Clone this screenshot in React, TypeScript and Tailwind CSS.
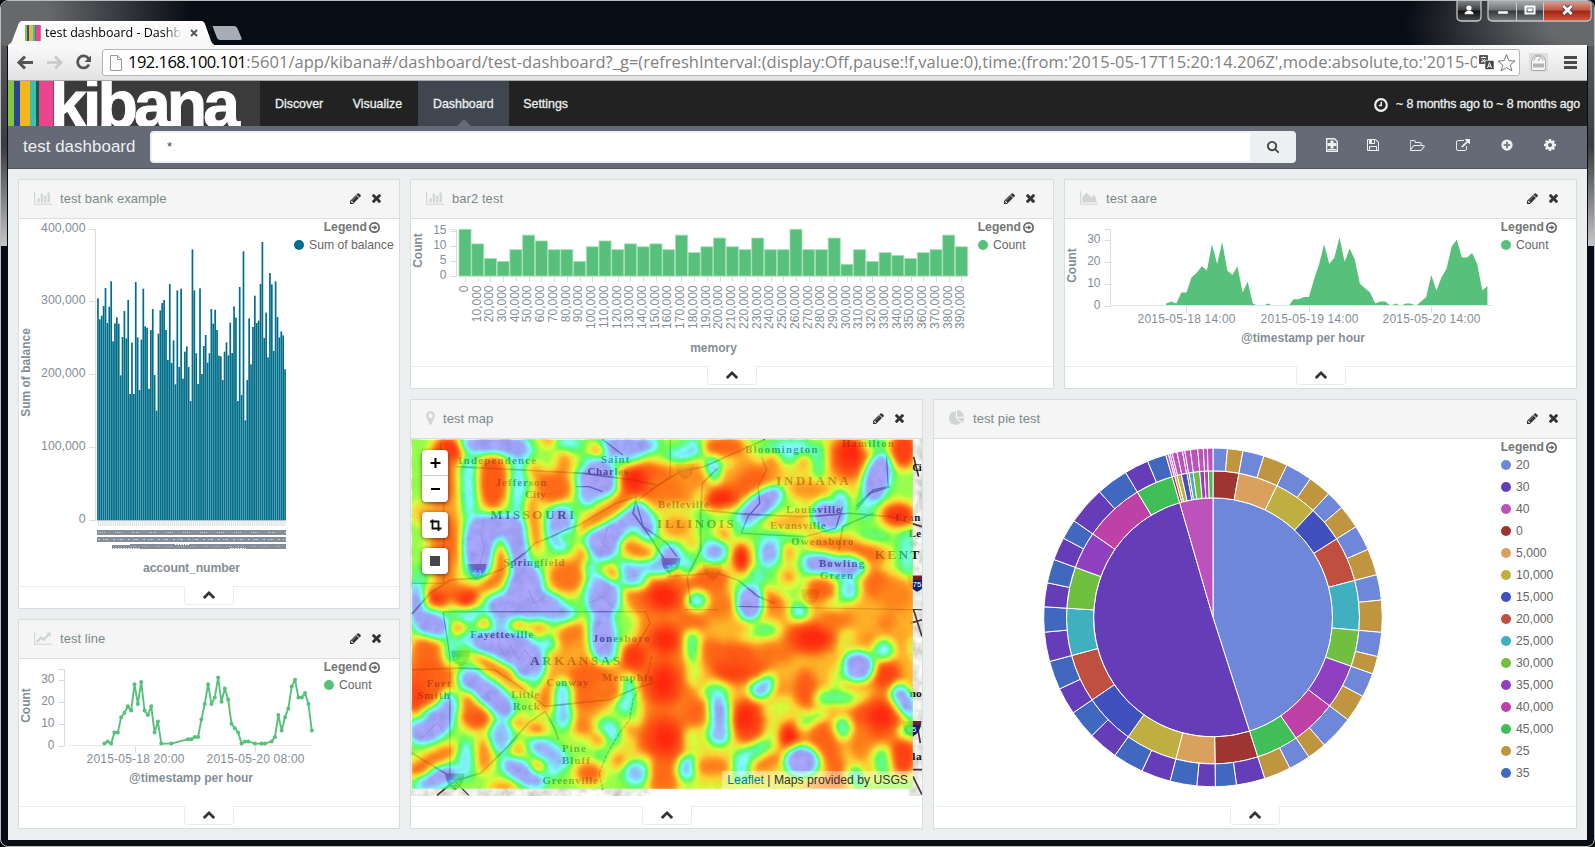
import React from "react";

/* ---------- icons ---------- */

const ICONS = {
  bar: ["0 0 2048 1536", "M640 768v512h-256v-512h256zm384-512v1024h-256v-1024h256zm1024 1152v128h-2048v-1536h128v1408h1920zm-640-896v768h-256v-768h256zm384-384v1152h-256v-1152h256z"],
  area: ["0 0 2048 1536", "M2048 1408v128h-2048v-1536h128v1408h1920zm-384-1024l256 896h-1664v-576l448-576 576 576z"],
  line: ["0 0 2048 1536", "M2048 1408v128h-2048v-1536h128v1408h1920zm-128-1248v435q0 21-19.5 29.5t-35.5-7.5l-121-121-633 633q-10 10-23 10t-23-10l-233-233-416 416-192-192 585-585q10-10 23-10t23 10l233 233 464-464-121-121q-16-16-7.5-35.5t29.5-19.5h435q14 0 23 9t9 23z"],
  pie: ["0 0 1792 1792", "M768 890l546 546q-106 108-247.5 168t-298.5 60q-209 0-385.5-103t-279.5-279.5-103-385.5 103-385.5 279.5-279.5 385.5-103v762zm187 6h773q0 157-60 298.5t-168 247.5zm709-128h-768v-768q209 0 385.5 103t279.5 279.5 103 385.5z"],
  marker: ["0 128 1024 1536", "M768 640q0-106-75-181t-181-75-181 75-75 181 75 181 181 75 181-75 75-181zm256 0q0 109-33 179l-364 774q-16 33-47.5 52t-67.5 19-67.5-19-46.5-52l-365-774q-33-70-33-179 0-212 150-362t362-150 362 150 150 362z"],
  pencil: ["128 128 1536 1536", "M491 1536l91-91-235-235-91 91v107h128v128h107zm523-928q0-22-22-22-10 0-17 7l-542 542q-7 7-7 17 0 22 22 22 10 0 17-7l542-542q7-7 7-17zm-54-192l416 416-832 832h-416v-416zm683 96q0 53-37 90l-166 166-416-416 166-165q36-38 90-38 53 0 91 38l235 234q37 39 37 91z"],
  times: ["302 366 1188 1188", "M1490 1322q0 40-28 68l-136 136q-28 28-68 28t-68-28l-294-294-294 294q-28 28-68 28t-68-28l-136-136q-28-28-28-68t28-68l294-294-294-294q-28-28-28-68t28-68l136-136q28-28 68-28t68 28l294 294 294-294q28-28 68-28t68 28l136 136q28 28 28 68t-28 68l-294 294 294 294q28 28 28 68z"],
  save: ["128 128 1536 1536", "M512 1536h768v-384h-768v384zm896 0h128v-896q0-14-10-38.5t-20-34.5l-281-281q-10-10-34-20t-39-10v416q0 40-28 68t-68 28h-576q-40 0-68-28t-28-68v-416h-128v1280h128v-416q0-40 28-68t68-28h832q40 0 68 28t28 68v416zm-384-928v-320q0-13-9.5-22.5t-22.5-9.5h-192q-13 0-22.5 9.5t-9.5 22.5v320q0 13 9.5 22.5t22.5 9.5h192q13 0 22.5-9.5t9.5-22.5zm640 32v928q0 40-28 68t-68 28h-1344q-40 0-68-28t-28-68v-1344q0-40 28-68t68-28h928q40 0 88 20t76 48l280 280q28 28 48 76t20 88z"],
  folder: ["0 128 1856 1408", "M1717 931q0-35-53-35h-1088q-40 0-85.5 21.5t-71.5 52.5l-294 363q-18 24-18 40 0 35 53 35h1088q40 0 86-22t71-53l294-363q18-22 18-39zm-1141-163h768v-160q0-40-28-68t-68-28h-576q-40 0-68-28t-28-68v-64q0-40-28-68t-68-28h-320q-40 0-68 28t-28 68v853l256-315q44-53 116-87.5t140-34.5zm1269 163q0 62-46 120l-295 363q-43 53-116 87.5t-140 34.5h-1088q-92 0-158-66t-66-158v-960q0-92 66-158t158-66h320q92 0 158 66t66 158v32h544q92 0 158 66t66 158v160h192q54 0 99 24.5t67 70.5q15 32 15 68z"],
  external: ["0 0 1792 1536", "M1408 928v320q0 119-84.5 203.5t-203.5 84.5h-832q-119 0-203.5-84.5t-84.5-203.5v-832q0-119 84.5-203.5t203.5-84.5h704q14 0 23 9t9 23v64q0 14-9 23t-23 9h-704q-66 0-113 47t-47 113v832q0 66 47 113t113 47h832q66 0 113-47t47-113v-320q0-14 9-23t23-9h64q14 0 23 9t9 23zm384-864v512q0 26-19 45t-45 19-45-19l-176-176-652 652q-10 10-23 10t-23-10l-114-114q-10-10-10-23t10-23l652-652-176-176q-19-19-19-45t19-45 45-19h512q26 0 45 19t19 45z"],
  plus: ["0 0 16 16", "M8 0.5a7.5 7.5 0 1 1 0 15a7.5 7.5 0 0 1 0-15zM6.9 3.6v3.3h-3.3v2.2h3.3v3.3h2.2v-3.3h3.3v-2.2h-3.3v-3.3z"],
  cog: ["128 128 1536 1536", "M1152 896q0-106-75-181t-181-75-181 75-75 181 75 181 181 75 181-75 75-181zm512-109v222q0 12-8 23t-20 13l-185 28q-19 54-39 91 35 50 107 138 10 12 10 25t-9 23q-27 37-99 108t-94 71q-12 0-26-9l-138-108q-44 23-91 38-16 136-29 186-7 28-36 28h-222q-14 0-24.5-8.5t-11.5-21.5l-28-184q-49-16-90-37l-141 107q-10 9-25 9-14 0-25-11-126-114-165-168-7-10-7-23 0-12 8-23 15-21 51-66.5t54-70.5q-27-50-41-99l-183-27q-13-2-21-12.5t-8-23.5v-222q0-12 8-23t19-13l186-28q14-46 39-92-40-57-107-138-10-12-10-24 0-10 9-23 26-36 98.5-107.5t94.5-71.5q13 0 26 10l138 107q44-23 91-38 16-136 29-186 7-28 36-28h222q14 0 24.5 8.5t11.5 21.5l28 184q49 16 90 37l142-107q9-9 24-9 13 0 25 10 129 119 165 170 7 8 7 22 0 12-8 23-15 21-51 66.5t-54 70.5q26 50 41 98l183 28q13 2 21 12.5t8 23.5z"],
  search: ["64 128 1664 1664", "M1216 832q0-185-131.5-316.5t-316.5-131.5-316.5 131.5-131.5 316.5 131.5 316.5 316.5 131.5 316.5-131.5 131.5-316.5zm512 832q0 52-38 90t-90 38q-54 0-90-38l-343-342q-179 124-399 124-143 0-273.5-55.5t-225-150-150-225-55.5-273.5 55.5-273.5 150-225 225-150 273.5-55.5 273.5 55.5 225 150 150 225 55.5 273.5q0 220-124 399l343 343q37 37 37 90z"],
  chevron: ["90 470 1612 1050", "M1683 1331l-166 165q-19 19-45 19t-45-19l-531-531-531 531q-19 19-45 19t-45-19l-166-165q-19-19-19-45.5t19-45.5l742-741q19-19 45-19t45 19l742 741q19 19 19 45.5t-19 45.5z"],
  arrow: ["0 0 11 11", "M5.500 0A5.500 5.500 0 1 1 5.500 11A5.500 5.500 0 0 1 5.500 0ZM5.500 1.700A3.800 3.800 0 1 0 5.500 9.300A3.800 3.800 0 0 0 5.500 1.700ZM2.600 4.700H5.300V2.900L8.400 5.500L5.300 8.100V6.300H2.600Z"],
} as const;

type IconName = keyof typeof ICONS;

function Icon({ name, className }: { name: IconName; className: string }) {
  const [viewBox, d] = ICONS[name];
  return (
    <svg viewBox={viewBox} className={"shrink-0 " + className} fill="currentColor" fillRule="evenodd">
      <path d={d} />
    </svg>
  );
}

/* ---------- browser window ---------- */

const STRIPES: [number, number, string][] = [
  [0, 6, "#85c441"],
  [6, 6, "#2b4591"],
  [12, 10, "#f3b71b"],
  [22, 6, "#3ebeb0"],
  [28, 3, "#07644f"],
  [31, 14.5, "#ec458d"],
];

function Favicon() {
  return (
    <svg className="h-4 w-4 shrink-0" viewBox="0 0 46 46" preserveAspectRatio="none">
      {STRIPES.map(([x, w, c]) => (
        <rect key={x} x={x} width={w} height="46" fill={c} />
      ))}
    </svg>
  );
}

function TitleBar() {
  return (
    <div className="relative flex h-[44px] items-end justify-between">
      <div className="relative ml-[-2px] h-[24px] w-[236px]">
        <svg className="absolute inset-0" width="236" height="24" viewBox="6 21 236 24">
          <defs>
            <linearGradient id="tabfill" x1="0" y1="0" x2="0" y2="1">
              <stop offset="0" stopColor="#ffffff" />
              <stop offset="1" stopColor="#f6f6f6" />
            </linearGradient>
          </defs>
          <path d="M6 45.5Q10.500 45 12 41L18.500 24Q19.500 21 22.500 21H201Q204 21 205 24L211 41Q212.500 45 216 45.500Z" fill="url(#tabfill)" />
          <path d="M212.500 26H234.500Q236.500 26 237.500 28.500L241.500 38Q242.300 40 240 40H220.500Q217.800 40 216.800 37.500Z" fill="#a6adb6" />
        </svg>
        <div className="relative flex h-[24px] items-center pl-[19px]">
          <Favicon />
          <span className="ml-1 h-[18px] w-[137px] overflow-hidden bg-gradient-to-r from-black from-85% to-white bg-clip-text font-['Open_Sans','Noto_Sans',sans-serif] text-[12.500px] leading-[17px] whitespace-nowrap text-transparent">
            test dashboard - Dashboard
          </span>
          <svg width="8" height="8" viewBox="0 0 8 8" className="ml-[8px]">
            <path d="M1 1L7 7M7 1L1 7" stroke="#555" strokeWidth="1.9" />
          </svg>
        </div>
      </div>
      <svg width="137" height="22" viewBox="1455 0 137 22" className="mr-[-5px] self-start">
        <defs>
          <linearGradient id="btn" x1="0" y1="0" x2="0" y2="1">
            <stop offset="0" stopColor="#a9abac" />
            <stop offset=".45" stopColor="#6f7376" />
            <stop offset=".5" stopColor="#34383b" />
            <stop offset="1" stopColor="#777b80" />
          </linearGradient>
          <linearGradient id="userbtn" x1="0" y1="0" x2="0" y2="1">
            <stop offset="0" stopColor="#808182" />
            <stop offset=".45" stopColor="#3c3d3e" />
            <stop offset=".5" stopColor="#0f1011" />
            <stop offset="1" stopColor="#4b4d50" />
          </linearGradient>
          <linearGradient id="closebtn" x1="0" y1="0" x2="0" y2="1">
            <stop offset="0" stopColor="#d99a8c" />
            <stop offset=".45" stopColor="#bd5540" />
            <stop offset=".5" stopColor="#a02410" />
            <stop offset="1" stopColor="#d6513a" />
          </linearGradient>
        </defs>
        <path d="M1457 0V15.500Q1457 20 1461.500 20H1477Q1481 20 1481 15.500V0" fill="url(#userbtn)" stroke="#c6c8ca" strokeWidth="1.300" />
        <path d="M1488 0V15.500Q1488 20 1492.500 20H1586.500Q1591 20 1591 15.500V0" fill="url(#btn)" stroke="#c6c8ca" strokeWidth="1.300" />
        <path d="M1544 1V19.300H1586.500Q1590.300 19.300 1590.300 15.500V1Z" fill="url(#closebtn)" />
        <path d="M1516.500 1V19.500M1543.500 1V19.500" stroke="#c6c8ca" />
        <circle cx="1469" cy="7" r="2.600" fill="#fff" />
        <path d="M1464.500 13.200Q1464.500 9.700 1469 9.700T1473.500 13.200Z" fill="#fff" />
        <rect x="1498" y="10" width="10" height="3" fill="#fff" stroke="#444a5a" strokeWidth=".5" />
        <path d="M1525.500 5.500H1534.500V12.500H1525.500ZM1528.500 8.500H1531.500V9.500H1528.500Z" fill="none" stroke="#fff" strokeWidth="2" />
        <path d="M1563.500 5L1571.500 13M1571.500 5L1563.500 13" stroke="#47485a" strokeWidth="4.600" />
        <path d="M1563.500 5L1571.500 13M1571.500 5L1563.500 13" stroke="#fff" strokeWidth="2.800" />
      </svg>
    </div>
  );
}

function Toolbar() {
  return (
    <div className="flex h-[36px] items-center border-b border-[#a9a9a9] bg-gradient-to-b from-[#fafafa] to-[#e2e2e2]">
      <svg width="94" height="35" viewBox="8 45 94 35" fill="none">
        <path d="M33 62.500H19.500M25 56.500L19 62.500L25 68.500" stroke="#555" strokeWidth="3" />
        <path d="M47 62.500H60.500M55 56.500L61 62.500L55 68.500" stroke="#c8c8c8" strokeWidth="2.600" />
        <path d="M88.500 58.500A6 6 0 1 0 89 64.500" stroke="#555" strokeWidth="2.800" />
        <path d="M91 55.500V62H84.500Z" fill="#555" />
      </svg>
      <div className="flex h-[27px] w-[1418px] items-center rounded-[3px] border border-[#b5b5b5] bg-white pl-[7px]">
        <svg width="12" height="16" viewBox="0 0 12 16" className="shrink-0">
          <path d="M.5.500H7.500L11.500 4.500V15.500H.5Z" fill="#fdfdfd" stroke="#999" />
          <path d="M7.500.5V4.500H11.500" fill="none" stroke="#999" />
        </svg>
        <div className="mt-[-1px] ml-[6px] w-[1349px] overflow-hidden font-['Open_Sans','Noto_Sans',sans-serif] text-[16.500px] leading-[24px] tracking-[0.020px] whitespace-nowrap text-[#808080]">
          <span className="tracking-[-0.530px] text-black">192.168.100.101</span>
          :5601/app/kibana#/dashboard/test-dashboard?_g=(refreshInterval:(display:Off,pause:!f,value:0),time:(from:'2015-05-17T15:20:14.206Z',mode:absolute,to:'2015-05-20
        </div>
        <svg width="40" height="20" viewBox="1477 53 40 20" className="shrink-0">
          <rect x="1479" y="55" width="9" height="9" rx="1" fill="#555" />
          <path d="M1481 57.500H1486M1483.500 56.500V57.500M1482 59Q1483.500 62 1486 62M1485 59Q1484 62 1481 62" stroke="#fff" fill="none" strokeWidth=".9" />
          <rect x="1485" y="60.500" width="9" height="9" rx="1" fill="#444" stroke="#fff" strokeWidth=".6" />
          <path d="M1487.500 68L1489.500 62.500L1491.500 68M1488.200 66.300H1490.800" stroke="#fff" fill="none" strokeWidth="1" />
          <path d="M1506.500 54.500L1508.800 60.700L1515 61L1510.200 65L1512 71L1506.500 67.500L1501 71L1502.800 65L1498 61L1504.200 60.700Z" fill="#fff" stroke="#777" />
        </svg>
      </div>
      <svg width="67" height="30" viewBox="1520 48 67 30">
        <rect x="1529" y="53" width="19" height="19" fill="#dedede" />
        <path d="M1531.500 69V62Q1532 55 1538.500 55T1545.500 62V69Q1545.500 70.500 1544 70.500H1533Q1531.500 70.500 1531.500 69Z" fill="#f6f6f6" stroke="#aaa" />
        <path d="M1534 60.500A4.500 4.500 0 0 1 1543 60.500M1538 61L1540.500 57.500" stroke="#999" fill="none" />
        <rect x="1533" y="63.500" width="11" height="4" fill="#b5b5b5" />
        <path d="M1564 57.500H1577M1564 62.500H1577M1564 67.500H1577" stroke="#4a4a4a" strokeWidth="2.900" />
      </svg>
    </div>
  );
}

/* ---------- kibana chrome ---------- */

function KibanaLogo() {
  return (
    <svg width="252" height="45" viewBox="0 0 252 45" className="shrink-0 bg-[#3b3b3b]">
      {STRIPES.map(([x, w, c]) => (
        <rect key={x} x={x} width={w} height="45" fill={c} />
      ))}
      <text x="42" y="45.500" fill="#fff" stroke="#fff" strokeWidth="1" fontSize="66" fontWeight="700" fontFamily="Liberation Sans, Arial, sans-serif" textLength="190" lengthAdjust="spacing">
        kibana
      </text>
    </svg>
  );
}

function NavBar() {
  return (
    <div className="flex h-[45px] items-center bg-[#222] pt-px text-[12.4px] text-[#ecf0f1] [-webkit-text-stroke:0.3px_#ecf0f1]">
      <div className="mt-[-1px] flex">
        <KibanaLogo />
      </div>
      <span className="pl-[15px] pr-[14.500px]">Discover</span>
      <span className="pr-[15.700px] pl-[15px]">Visualize</span>
      <span className="relative mt-[-1px] flex h-[45px] w-[91px] items-center justify-center bg-[#404650] pt-px">
        Dashboard
        <span className="absolute bottom-0 left-[39px] border-x-[7px] border-b-[7px] border-x-transparent border-b-[#656a76]" />
      </span>
      <span className="px-[14.500px]">Settings</span>
      <svg width="14" height="14" viewBox="0 0 14 14" className="mt-[2px] mr-[8px] ml-auto" fill="none" stroke="#ecf0f1">
        <circle cx="7" cy="7" r="5.800" strokeWidth="2.200" />
        <path d="M7.300 3.800V7.600H4.800" strokeWidth="1.500" />
      </svg>
      <span className="mr-[7px] tracking-[-0.150px]">~ 8 months ago to ~ 8 months ago</span>
    </div>
  );
}

function SubNav() {
  return (
    <div className="flex h-[43px] items-center border-b border-[#50545f] bg-[#656a76] pb-px text-[#ecf0f1]">
      <span className="w-[142px] pl-[15px] text-[16.900px] tracking-[0.050px]">test dashboard</span>
      <div className="flex h-[32px] w-[1146px] overflow-hidden rounded-[4px] border-2 border-[#ecf0f1] bg-white">
        <span className="flex-1 pt-[4px] pl-[15px] text-[13px] text-[#444]">*</span>
        <span className="flex w-[44px] items-center justify-center bg-[#ecf0f1] text-[#444]">
          <Icon name="search" className="ml-px h-[12px] w-[12px]" />
        </span>
      </div>
      <div className="mt-[-3px] ml-[30px] flex items-center">
        <span className="flex w-[12px] justify-center">
          <svg width="12" height="14" viewBox="0 0 12 14" className="shrink-0">
            <path d="M.7.700H8.500L11.300 3.500V13.300H.7Z" fill="none" stroke="#ecf0f1" strokeWidth="1.400" />
            <path d="M6 2.500V10.500M1.500 6.500H10.500" stroke="#ecf0f1" strokeWidth="3.200" />
            <path d="M2 11.500H10" stroke="#ecf0f1" strokeWidth="1.200" />
          </svg>
        </span>
        <Icon name="save" className="ml-[29px] h-[12px] w-[12px]" />
        <Icon name="folder" className="ml-[31px] h-[11px] w-[15px]" />
        <Icon name="external" className="ml-[31px] h-[12px] w-[14px]" />
        <Icon name="plus" className="ml-[31px] h-[12px] w-[12px]" />
        <Icon name="cog" className="ml-[31px] h-[12px] w-[12px]" />
      </div>
    </div>
  );
}

/* ---------- panels ---------- */

type PanelProps = {
  title: string;
  icon: IconName;
  iconClass?: string;
  className: string;
  children: React.ReactNode;
};

function Panel({ title, icon, iconClass = "h-[14px] w-[18px]", className, children }: PanelProps) {
  return (
    <section className={"flex shrink-0 flex-col border border-[#dadddd] bg-white " + className}>
      <header className="flex h-[39px] shrink-0 items-center border-b border-[#dadddd] bg-[#f5f5f5] pr-[18px] pl-[15px] text-[13px] tracking-[0.060px] text-[#7b8a8b]">
        <Icon name={icon} className={"mt-[-3px] mr-[8px] text-[#d0d5d6] " + iconClass} />
        <span>{title}</span>
        <Icon name="pencil" className="mt-[-1px] mr-[11px] ml-auto h-[11px] w-[11px] text-[#333]" />
        <Icon name="times" className="mt-[-1px] h-[9px] w-[9px] text-[#333]" />
      </header>
      <div className="flex min-h-0 flex-1 justify-between overflow-hidden">{children}</div>
      <footer className="flex h-[22px] shrink-0 justify-center border-t border-[#e9eced]">
        <span className="mt-[-1px] flex h-[19px] w-[50px] items-center justify-center rounded-b-[4px] border border-t-0 border-[#e9eced] bg-white text-[#333]">
          <Icon name="chevron" className="h-[8px] w-[12px]" />
        </span>
      </footer>
    </section>
  );
}

function Legend({ items, className = "w-[75px]" }: { items: [string, string][]; className?: string }) {
  return (
    <div className={"shrink-0 text-[12.200px] text-[#666] " + className}>
      <div className="flex h-[17px] items-center justify-end pr-[19px] pb-px font-bold text-[#767676]">
        Legend
        <Icon name="arrow" className="ml-[2px] h-[11px] w-[11px] text-[#666]" />
      </div>
      {items.map(([label, color]) => (
        <div key={label} className="flex h-[22px] items-center pb-[4px]">
          <svg width="10" height="10" viewBox="0 0 10 10" className="mr-[5px] shrink-0">
            <circle cx="5" cy="5" r="5" fill={color} />
          </svg>
          <span className="whitespace-nowrap">{label}</span>
        </div>
      ))}
    </div>
  );
}

type ChartProps = { x: number; y: number; w: number; h: number; children: React.ReactNode };

function Chart({ x, y, w, h, children }: ChartProps) {
  return (
    <svg width={w} height={h} viewBox={`${x} ${y} ${w} ${h}`} className="shrink-0" fill="#848e96" fontSize="12" fontFamily="Liberation Sans, Arial, sans-serif">
      {children}
    </svg>
  );
}

function YAxis({ x, top, bottom, ticks, size = 12 }: { x: number; top: number; bottom: number; ticks: [number, string][]; size?: number }) {
  return (
    <g>
      <path d={`M${x - 6} ${top}H${x}V${bottom}H${x - 6}` + ticks.map(([y]) => `M${x - 6} ${y}H${x}`).join("")} fill="none" stroke="#dcdcdc" />
      {ticks.map(([y, t]) => (
        <text key={t} x={x - 10} y={y + 2} textAnchor="end" fontSize={size}>
          {t}
        </text>
      ))}
    </g>
  );
}

function YTitle({ x, y, children }: { x: number; y: number; children: string }) {
  return (
    <text transform={`translate(${x + 4} ${y}) rotate(-90)`} textAnchor="middle" fontWeight="700">
      {children}
    </text>
  );
}

/* ---------- bank chart ---------- */

const BANK = [
  385, 448, 437, 408, 354, 459, 410, 334, 514, 460, 442, 461, 616, 501, 423, 505, 390, 672, 518, 672, 336, 502, 660, 509, 356,
  469, 473, 656, 480, 417, 615, 722, 491, 421, 399, 390, 480, 570, 342, 579, 511, 643, 361, 591, 356, 626, 545, 529, 591, 693,
  238, 361, 550, 642, 355, 612, 528, 495, 578, 550, 417, 461, 419, 480, 557, 559, 630, 545, 517, 556, 458, 549, 409, 443, 693,
  351, 675, 244, 751, 630, 445, 583, 471, 377, 459, 452, 342, 216, 504, 428, 562, 309, 343, 543, 334, 441, 502, 484, 496, 598,
];

function BankChart() {
  const pitch = 189 / BANK.length;
  return (
    <Chart x={19} y={219} w={274} h={367}>
      <YAxis x={95.5} top={229.5} bottom={520.5} size={12.3} ticks={[[229.5, "400,000"], [301.5, "300,000"], [374.5, "200,000"], [447.5, "100,000"], [520.5, "0"]]} />
      <YTitle x={25.5} y={372.5}>Sum of balance</YTitle>
      {BANK.map((v, i) => (
        <rect key={i} x={97.1 + i * pitch} y={170 + v / 3} width={1.7} height={350 - v / 3} fill="#006e8a" />
      ))}
      <path d="M97 520.500H286" stroke="#a9c9d2" />
      <path d="M98 523.500H286" stroke="#dcdcdc" strokeWidth="5" strokeDasharray="1 .9" />
      <path d="M97 532.500H286M97 539.500H286M112 546.500H286" stroke="#858e99" strokeWidth="5" />
      <path d="M98 532.500H286" stroke="#b9dcc4" strokeDasharray="1 1 1 1 1 1 1 10" />
      <path d="M98 539.500H286" stroke="#c3cbd6" strokeDasharray="2 3 1 1 3 5" />
      <path d="M113 548.500H140M175 544.500H190M230 548.500H246" stroke="#fff" strokeDasharray="1.500 1" />
      <path d="M111 544.500H130" stroke="#fff" />
      <path d="M130 546.500H286" stroke="#a5bdc0" strokeDasharray="1 2 1 1 1 6" />
      <text x="191.500" y="572" textAnchor="middle" fontWeight="700" textLength="97" fontSize="12.300">account_number</text>
    </Chart>
  );
}

/* ---------- memory histogram ---------- */

const MEMORY = [16, 11, 6, 5, 9, 14, 12, 9, 9, 5, 10, 12, 9, 11, 10, 11, 9, 14, 8, 10, 13, 10, 9, 13, 9, 9, 16, 9, 9, 13, 4, 9, 5, 8, 7, 6, 8, 9, 14, 10];

function MemoryChart() {
  const pitch = 12.73;
  return (
    <Chart x={411} y={219} w={565} h={147}>
      <YAxis x={456.5} top={229.5} bottom={276.5} ticks={[[231.5, "15"], [246.5, "10"], [261.5, "5"], [276.5, "0"]]} />
      <YTitle x={417.5} y={250.5}>Count</YTitle>
      <path d="M458 276.500H969" stroke="#e4e8e8" />
      {MEMORY.map((v, i) => (
        <g key={i}>
          <rect x={459 + i * pitch} y={276 - v * 2.92} width={pitch - 0.7} height={v * 2.92} fill="#57c17b" stroke="#a4ddb8" strokeWidth=".8" />
          <path d={`M${Math.round(465 + i * pitch) + 0.5} 277V282`} stroke="#dcdcdc" />
          <text transform={`translate(${467.8 + i * pitch} 285.500) rotate(-90)`} textAnchor="end">
            {i === 0 ? "0" : i + "0,000"}
          </text>
        </g>
      ))}
      <text x="713.500" y="352" textAnchor="middle" fontWeight="700">memory</text>
    </Chart>
  );
}

/* ---------- hourly counts ---------- */

const HOURLY = [
  1, 2, 1, 6, 6, 13, 15, 18, 16, 28, 19, 29, 16, 14, 18, 6, 11, 1, 0, 0, 1, 0, 0, 0, 0, 3, 3, 4, 4, 12, 19, 28, 19, 22, 31, 20, 26, 21,
  10, 8, 6, 1, 2, 2, 0, 1, 0, 1, 1, 0, 2, 4, 14, 7, 13, 17, 27, 30, 22, 22, 24, 19, 7, 9,
];

const countTicks = (zero: number): [number, string][] => [[zero - 66, "30"], [zero - 44, "20"], [zero - 22, "10"], [zero, "0"]];

function AreaChart() {
  const px = (i: number) => 1166.1 + i * 5.1;
  const pts = HOURLY.map((v, i) => `${px(i).toFixed(1)},${(305.8 - v * 2.2).toFixed(1)}`).join(" ");
  return (
    <Chart x={1065} y={219} w={434} h={147}>
      <YAxis x={1110.5} top={229.5} bottom={306.5} ticks={countTicks(306.5)} />
      <YTitle x={1071.5} y={265.5}>Count</YTitle>
      <polygon points={`${px(0)},305.800 ${pts} ${px(63)},305.800`} fill="#57c17b" />
      <path d="M1112 305.500H1493" stroke="#e2e6e6" />
      {[[1186.5, "2015-05-18 14:00"], [1309.5, "2015-05-19 14:00"], [1431.5, "2015-05-20 14:00"]].map(([x, t]) => (
        <g key={t}>
          <path d={`M${x} 306V312`} stroke="#dcdcdc" />
          <text x={x} y="323" textAnchor="middle" textLength="98">{t}</text>
        </g>
      ))}
      <text x="1303" y="342" textAnchor="middle" fontWeight="700" textLength="124">@timestamp per hour</text>
    </Chart>
  );
}

function LineChart() {
  const pts = HOURLY.slice(0, 63)
    .map((v, i): [number, number, number] => [104.4 + i * 3.345, 745.8 - v * 2.2, v])
    .filter((p) => p[2] > 0);
  return (
    <Chart x={19} y={659} w={303} h={147}>
      <YAxis x={64.5} top={669.5} bottom={746.5} ticks={countTicks(746.5)} />
      <YTitle x={25.5} y={705.5}>Count</YTitle>
      <path d="M69 745.500H313" stroke="#e6eaea" />
      <polyline points={pts.map(([x, y]) => `${x},${y}`).join(" ")} fill="none" stroke="#57c17b" strokeWidth="1.900" strokeLinejoin="round" />
      {pts.map(([x, y], i) => (
        <circle key={i} cx={x} cy={y} r="2" fill="#57c17b" />
      ))}
      {[[135.5, "2015-05-18 20:00"], [255.5, "2015-05-20 08:00"]].map(([x, t]) => (
        <g key={t}>
          <path d={`M${x} 746V752`} stroke="#dcdcdc" />
          <text x={x} y="763" textAnchor="middle" textLength="98">{t}</text>
        </g>
      ))}
      <text x="191" y="782" textAnchor="middle" fontWeight="700" textLength="124">@timestamp per hour</text>
    </Chart>
  );
}

/* ---------- pie ---------- */

const C = {
  a20: "#6e87d8", a30: "#663db8", a40: "#bc52bc", b0: "#9e3533", b5: "#daa05d", b10: "#bfaf40", b15: "#4050bf", b20: "#bf5040",
  b25: "#40afbf", b30: "#70bf40", b35: "#8f40bf", b40: "#bf40a7", b45: "#40bf58", a25: "#bf9540", a35: "#4068bf",
};
const TEN = [C.b0, C.b5, C.b10, C.b15, C.b20, C.b25, C.b30, C.b35, C.b40, C.b45];

const ring = (angles: number[], colors: string[]): [number, number, string][] =>
  angles.slice(1).map((a, i) => [angles[i], a, colors[i % colors.length]]);

const INNER = ring([0, 162.2, 343.8, 360], [C.a20, C.a30, C.a40]);
const MIDDLE = [
  ...ring([0, 10.2, 25.9, 43.1, 57.6, 75.4, 95.1, 109.5, 127.2, 145.5, 162.2], TEN),
  ...ring([162.2, 179.2, 194.7, 215.4, 235.7, 254.9, 273.6, 290, 304.8, 328.9, 343.8], TEN),
  ...ring([343.8, 344.8, 345.8, 347.5, 349.8, 350.6, 352.2, 354.8, 356.6, 358.2, 360], TEN),
];
const OUTER = [
  ...ring([0, 4.9, 10.2, 17.5, 25.9, 35.1, 43.1, 49.5, 57.6, 66.3, 75.4, 84.1, 95.1, 103.4, 109.5, 117.8, 127.2, 138.9, 145.5, 153, 162.2], [C.a20, C.a25]),
  ...ring([162.2, 172, 179.2, 185.5, 194.7, 204.8, 215.4, 225.7, 235.7, 245, 254.9, 265, 273.6, 281.8, 290, 297.9, 304.8, 317.9, 328.9, 337.3, 343.8], [C.a30, C.a35]),
  ...ring([343.8, 344.7, 345.3, 346, 347.7, 349.6, 350.4, 352.3, 354.8, 356.7, 358.1, 360], [C.a40]),
];

function arcPath(r0: number, r1: number, a0: number, a1: number) {
  const p = (r: number, a: number) => {
    const t = (a * Math.PI) / 180;
    return `${(1213 + r * Math.sin(t)).toFixed(2)} ${(617.4 - r * Math.cos(t)).toFixed(2)}`;
  };
  const big = a1 - a0 > 180 ? 1 : 0;
  return `M${p(r0, a0)}L${p(r1, a0)}A${r1} ${r1} 0 ${big} 1 ${p(r1, a1)}L${p(r0, a1)}A${r0} ${r0} 0 ${big} 0 ${p(r0, a0)}Z`;
}

function PieChart() {
  const levels: [number, number, [number, number, string][]][] = [[0.01, 119.5, INNER], [119.5, 146.5, MIDDLE], [146.5, 169.3, OUTER]];
  return (
    <Chart x={934} y={439} w={565} h={367}>
      {levels.map(([r0, r1, segs]) => segs.map(([a0, a1, c]) => <path key={`${r0}-${a0}`} d={arcPath(r0, r1, a0, a1)} fill={c} stroke="#fff" strokeWidth="1" />))}
    </Chart>
  );
}

/* ---------- map ---------- */

// Heat blobs: x, y, rx, ry, rotation, intensity (0 = cold, 1 = hot)
type Blob = [number, number, number, number, number, number];

const GROUND: Blob[] = [
  [1080, 860, 460, 230, 0, 0.83],
  [1100, 1080, 460, 130, 0, 0.75],
  [780, 900, 95, 340, 0, 0.9],
  [1440, 660, 130, 120, 0, 0.84],
  [780, 610, 120, 95, 0, 0.9],
  [800, 290, 190, 75, -5, 0.86],
  [1040, 270, 120, 75, -30, 0.86],
  [1290, 250, 160, 120, 0, 0.76],
  [1330, 210, 75, 80, 0, 0.84],
  [540, 860, 115, 135, 0, 0.85],
  [90, 870, 85, 125, 0, 0.87],
  [130, 400, 52, 260, 0, 0.86],
  [1330, 480, 135, 45, 10, 0.85],
  [1400, 970, 110, 140, 0, 0.86],
  [1230, 1040, 100, 90, 0, 0.84],
];

const COLD: Blob[] = [
  [280, 162, 100, 26, 0, 0], [350, 185, 40, 20, 0, 0.1],
  [205, 290, 20, 100, 0, 0.32], [352, 290, 20, 100, 0, 0.32], [500, 160, 40, 20, 0, 0.35],
  [665, 165, 100, 22, 0, 0], [600, 195, 50, 20, -20, 0.1], [590, 270, 60, 50, 0, 0], [555, 315, 24, 30, 0, 0.1], [680, 200, 40, 20, 0, 0.25],
  [845, 195, 55, 20, 0, 0.3], [880, 165, 40, 15, 0, 0.33], [925, 240, 20, 40, 0, 0.2], [905, 270, 15, 30, 0, 0.35],
  [235, 470, 42, 90, 0, 0], [290, 410, 90, 32, 0, 0], [345, 500, 30, 110, 0, 0], [370, 590, 50, 70, 0, 0], [370, 645, 110, 40, 0, 0],
  [475, 410, 38, 70, 0, 0.1], [240, 680, 90, 22, 0, 0.28], [460, 670, 60, 24, 0, 0.15],
  [610, 440, 52, 70, 25, 0], [600, 620, 48, 60, 0, 0], [560, 560, 20, 70, 0, 0.3], [670, 390, 50, 28, -30, 0.08], [720, 390, 28, 60, -25, 0.08], [670, 540, 55, 20, 0, 0.15], [760, 530, 50, 24, 0, 0.2], [800, 500, 30, 34, 0, 0.05], [690, 570, 40, 20, 0, 0.2],
  [1065, 345, 78, 30, -38, 0], [1020, 390, 28, 26, 0, 0.15], [1095, 490, 30, 42, 0, 0.12], [930, 485, 34, 30, 0, 0.12], [850, 525, 20, 28, 0, 0.35], [900, 350, 20, 80, 0, 0.48], [985, 420, 20, 20, 0, 0.45],
  [1150, 190, 90, 30, 0, 0.4], [1160, 165, 60, 14, 0, 0.35], [1240, 210, 18, 60, 0, 0.45],
  [1270, 375, 48, 45, 0, 0], [1300, 340, 24, 35, 0, 0.1], [1240, 520, 55, 28, 0, 0.05], [1320, 530, 55, 28, 0, 0.1], [1330, 600, 26, 34, 0, 0.28], [1130, 440, 80, 18, 0, 0.48], [1060, 560, 24, 26, 0, 0.42],
  [1412, 265, 36, 75, 15, 0], [1375, 350, 24, 40, 0, 0.42], [1400, 165, 60, 12, 0, 0.45], [1500, 490, 22, 70, 0, 0.4], [1400, 440, 50, 16, 10, 0.5],
  [1035, 640, 36, 50, 0, 0], [1180, 665, 28, 22, 0, 0.28],
  [48, 640, 22, 60, 0, 0.1], [95, 705, 50, 38, 20, 0.05], [60, 560, 22, 28, 0, 0.5], [105, 560, 15, 25, 0, 0.5],
  [270, 745, 130, 22, 0, 0.28], [300, 695, 36, 26, 0, 0.2], [320, 780, 105, 42, 12, 0], [385, 830, 42, 45, 30, 0], [600, 740, 36, 75, 0, 0.02], [620, 795, 26, 20, 0, 0.2], [440, 760, 30, 18, 0, 0.3],
  [150, 780, 18, 45, 0, 0.4], [210, 870, 38, 32, 20, 0.1], [275, 925, 78, 34, 42, 0.02], [95, 1005, 72, 42, -35, 0], [140, 950, 28, 45, 0, 0.15], [300, 1040, 32, 50, 0, 0.2], [390, 880, 26, 36, 0, 0.38],
  [440, 1090, 66, 28, 35, 0.15], [365, 1150, 72, 28, 30, 0.05], [110, 1165, 66, 26, -20, 0.05], [195, 1110, 20, 60, 0, 0.3], [485, 930, 26, 60, 0, 0.25], [485, 985, 24, 30, 0, 0.25], [450, 1130, 28, 30, 0, 0.28],
  [620, 1025, 28, 38, 0, 0.3], [670, 920, 24, 60, 10, 0.3], [700, 1150, 34, 34, 0, 0.22], [600, 1090, 20, 30, 0, 0.5],
  [850, 1135, 24, 38, 10, 0.18], [945, 965, 24, 85, -5, 0.1], [945, 1030, 30, 35, 0, 0.16], [1070, 885, 32, 40, 20, 0.15], [865, 760, 18, 70, 0, 0.45], [935, 905, 40, 20, 0, 0.45], [1080, 720, 40, 20, 0, 0.48],
  [1190, 1115, 48, 42, 0, 0], [1355, 830, 45, 42, 0, 0], [1430, 780, 30, 28, 0, 0.32], [1490, 930, 24, 60, -30, 0.08], [1290, 925, 70, 22, 0, 0.48], [1220, 990, 45, 15, -30, 0.48], [1310, 1015, 22, 32, 0, 0.38],
  [1050, 1085, 55, 20, -30, 0.4], [1010, 1130, 22, 48, 0, 0.32], [1430, 1115, 30, 40, 0, 0.48], [1350, 1165, 22, 32, 0, 0.38], [1500, 1030, 20, 24, 0, 0.4], [740, 1100, 24, 24, 0, 0.55],
];

const WARM: Blob[] = [
  [140, 185, 50, 48, 0, 1], [125, 260, 40, 90, 0, 0.92], [140, 470, 42, 95, 0, 0.92], [60, 370, 24, 34, 0, 0.83], [130, 540, 42, 40, 0, 0.9],
  [275, 275, 50, 90, 0, 0.94], [440, 150, 26, 22, 0, 0.88], [487, 220, 28, 42, 0, 0.88], [400, 245, 30, 28, 0, 0.85], [455, 295, 58, 55, 0, 0.92], [395, 400, 27, 92, -8, 0.88],
  [585, 182, 26, 26, 0, 0.9], [610, 370, 105, 29, -33, 0.9], [720, 270, 84, 62, 0, 0.94], [695, 270, 35, 34, 0, 1], [800, 290, 65, 45, 0, 0.91], [870, 270, 55, 38, 0, 0.88],
  [960, 170, 70, 38, 0, 0.93], [950, 325, 62, 38, -15, 0.96], [950, 325, 36, 22, -15, 1], [1040, 275, 60, 42, -40, 0.93], [1100, 215, 30, 30, 0, 0.88], [880, 220, 30, 18, 0, 0.86],
  [1330, 200, 56, 65, 0, 0.96], [1330, 190, 30, 36, 0, 1.02], [1490, 180, 46, 60, 0, 0.97], [1195, 215, 24, 24, 0, 0.86], [1210, 300, 65, 30, 0, 0.87], [1475, 375, 55, 42, 0, 0.98], [1150, 390, 80, 20, -15, 0.85], [1185, 415, 70, 18, 0, 0.82],
  [700, 480, 60, 28, 25, 0.9], [820, 410, 52, 40, 0, 0.86], [865, 460, 20, 22, 0, 0.82], [495, 560, 60, 56, 0, 0.91], [540, 495, 26, 30, 0, 0.88], [630, 552, 27, 27, 0, 0.9],
  [300, 510, 30, 42, 0, 0.9], [280, 570, 62, 28, -35, 0.91], [110, 620, 38, 40, 0, 0.98], [195, 622, 40, 40, 0, 0.99], [150, 590, 62, 20, 0, 0.9],
  [780, 620, 70, 52, 0, 0.95], [780, 620, 40, 34, 0, 1.03], [920, 570, 62, 46, 0, 0.93], [940, 640, 55, 50, 0, 0.9], [1010, 505, 32, 50, 0, 1], [1105, 630, 30, 44, -10, 0.94], [1150, 490, 24, 32, 0, 0.86], [1150, 560, 28, 28, 0, 0.88], [960, 430, 26, 32, 0, 0.87],
  [1240, 600, 56, 42, 0, 0.93], [1410, 580, 42, 50, 0, 0.92], [1470, 620, 50, 50, 0, 0.89], [1290, 470, 65, 28, 0, 0.9], [1380, 490, 52, 30, 20, 0.92],
  [880, 632, 28, 24, 0, 0.3],
  [250, 700, 25, 24, 0, 0.88], [172, 715, 25, 28, 0, 0.88], [350, 703, 28, 22, 0, 0.88], [412, 716, 28, 24, 0, 0.88], [505, 730, 54, 33, -30, 0.9], [80, 780, 52, 44, 30, 0.92],
  [80, 880, 62, 70, 0, 0.94], [45, 930, 30, 50, 0, 0.97], [120, 860, 30, 50, 0, 0.93], [285, 835, 84, 26, 33, 0.9], [345, 885, 52, 22, 20, 0.87], [225, 980, 52, 45, 20, 0.95], [205, 940, 28, 36, 0, 0.91],
  [560, 870, 68, 55, 0, 0.93], [550, 930, 50, 34, 0, 0.92], [620, 900, 45, 42, 0, 0.91], [430, 925, 30, 48, 0, 0.9], [405, 1018, 30, 27, 0, 0.9], [348, 997, 27, 23, 0, 0.88], [540, 1010, 36, 32, 0, 0.9], [588, 1050, 28, 26, 0, 0.88],
  [105, 1105, 78, 27, -28, 0.91], [55, 1140, 37, 28, 0, 0.93], [250, 1095, 28, 58, 0, 0.89], [346, 1080, 24, 24, 0, 0.88], [410, 1130, 26, 24, 0, 0.88], [560, 1150, 44, 36, 0, 0.93], [645, 1113, 30, 27, 0, 0.88], [305, 1190, 45, 16, 0, 0.92], [685, 1018, 27, 25, 0, 0.87],
  [785, 750, 54, 52, 0, 0.96], [785, 750, 32, 30, 0, 1.03], [690, 800, 42, 44, 0, 0.98], [780, 880, 58, 74, 0, 0.96], [780, 880, 30, 46, 0, 1], [780, 1050, 66, 78, 0, 0.96], [785, 1045, 34, 38, 0, 1.05], [775, 1150, 42, 45, 0, 0.92],
  [1215, 745, 78, 52, 0, 0.96], [1222, 745, 46, 30, 0, 1.05], [1000, 820, 98, 64, 10, 0.94], [985, 850, 55, 32, 0, 0.97], [920, 780, 36, 36, 0, 0.93], [1110, 790, 60, 34, 0, 0.91], [1200, 900, 36, 64, 0, 0.94], [1130, 895, 28, 28, 0, 0.87],
  [1440, 855, 44, 50, 10, 0.97], [1030, 995, 56, 72, 0, 0.96], [1022, 985, 30, 36, 0, 1.02], [1410, 985, 78, 68, 0, 0.95], [1422, 980, 36, 34, 0, 1.05], [1150, 1038, 34, 42, 0, 1], [1255, 1050, 46, 64, -20, 0.93], [1490, 1100, 44, 62, 0, 0.97], [1360, 1060, 30, 60, 0, 0.9],
  [880, 970, 36, 46, 10, 0.93], [925, 1130, 60, 31, 0, 0.9], [1090, 1115, 55, 28, -30, 0.9], [1290, 1130, 32, 48, 0, 0.93], [1270, 1190, 80, 20, 0, 0.92], [1292, 965, 24, 24, 0, 0.85], [1385, 1130, 20, 42, 0, 0.82], [1440, 700, 28, 28, 0, 0.9], [1390, 750, 28, 26, 0, 0.88], [1480, 760, 22, 32, 0, 0.86],
  [870, 700, 44, 28, 0, 0.92], [1120, 665, 40, 15, 0, 0.88], [1290, 690, 55, 30, 0, 0.91],
];

// Yellow-green gaps between the warm clusters
const GAPS: Blob[] = [
  [870, 850, 14, 40, 0, 0.62], [1120, 950, 46, 18, -20, 0.68], [1100, 1040, 12, 50, 0, 0.64], [860, 1050, 14, 36, 0, 0.64], [1050, 740, 46, 10, 0, 0.66],
  [1300, 860, 18, 46, 20, 0.64], [1190, 980, 12, 26, 0, 0.66], [1350, 930, 46, 10, -25, 0.64], [700, 960, 16, 50, 0, 0.64], [640, 980, 26, 24, 0, 0.68],
  [1320, 750, 14, 36, 20, 0.68], [490, 440, 30, 20, 0, 0.6], [900, 400, 14, 46, 0, 0.56], [1110, 560, 12, 56, 0, 0.6],
  [1190, 560, 12, 56, 0, 0.6], [1280, 330, 18, 18, 0, 0.6], [970, 400, 56, 9, 0, 0.68], [1060, 190, 10, 36, 0, 0.68],
  [60, 990, 40, 10, 0, 0.56], [510, 1060, 26, 12, 0, 0.68], [840, 360, 56, 9, 10, 0.68],
];

function HeatBlobs({ blobs }: { blobs: Blob[] }) {
  return (
    <g>
      {blobs.map(([x, y, rx, ry, rot, v], i) => {
        const k = Math.round(Math.max(0, Math.min(1, v)) * 255);
        return <ellipse key={i} cx={x} cy={y} rx={rx} ry={ry} transform={`rotate(${rot} ${x} ${y})`} fill={`rgb(${k},${k},${k})`} />;
      })}
    </g>
  );
}

// text, x, y baseline, width, size, colour
const PLACES: [string, number, number, number, number, string][] = [
  ["Independence", 173, 221, 230, 32, "#10103a"],
  ["Saint", 595, 218, 84, 32, "#10103a"],
  ["Charles", 555, 254, 120, 32, "#10103a"],
  ["Jefferson", 284, 288, 150, 32, "#10103a"],
  ["City", 370, 324, 62, 32, "#10103a"],
  ["MISSOURI", 268, 388, 248, 38, "#111"],
  ["Springfield", 307, 528, 180, 32, "#10103a"],
  ["Belleville", 764, 354, 150, 32, "#10103a"],
  ["ILLINOIS", 762, 414, 226, 38, "#111"],
  ["Bloomington", 1022, 188, 214, 32, "#10103a"],
  ["Hamilton", 1308, 170, 154, 32, "#10103a"],
  ["INDIANA", 1114, 284, 214, 38, "#111"],
  ["Louisville", 1143, 368, 162, 32, "#10103a"],
  ["Evansville", 1096, 416, 164, 32, "#10103a"],
  ["Owensboro", 1158, 464, 184, 32, "#10103a"],
  ["Bowling", 1240, 530, 134, 32, "#10103a"],
  ["Green", 1243, 568, 98, 32, "#10103a"],
  ["KENT", 1405, 508, 132, 40, "#111"],
  ["Fran", 1466, 392, 74, 32, "#10103a"],
  ["Fayetteville", 208, 744, 186, 32, "#10103a"],
  ["Jonesboro", 571, 758, 168, 32, "#10103a"],
  ["ARKANSAS", 386, 827, 266, 38, "#111"],
  ["Fort", 80, 892, 70, 32, "#10103a"],
  ["Smith", 52, 928, 96, 32, "#10103a"],
  ["Conway", 434, 890, 124, 32, "#10103a"],
  ["Memphis", 598, 875, 150, 32, "#10103a"],
  ["Little", 330, 926, 82, 32, "#10103a"],
  ["Rock", 334, 962, 80, 32, "#10103a"],
  ["Pine", 480, 1088, 70, 32, "#10103a"],
  ["Bluff", 480, 1124, 82, 32, "#10103a"],
  ["Greenville", 422, 1184, 164, 32, "#10103a"],
  ["Ci", 1516, 242, 28, 32, "#111"],
  ["Le", 1506, 440, 36, 32, "#111"],
  ["no", 1508, 922, 36, 34, "#111"],
  ["la", 1516, 1112, 28, 34, "#111"],
];

const SHIELDS: [number, number, string][] = [[228, 545, "44"], [802, 528, "57"], [844, 243, "70"], [925, 545, "24"], [1215, 620, "65"], [180, 805, "540"], [163, 1174, "30"], [1530, 580, "75"], [1515, 1016, "65"]];

function MapLines() {
  return (
    <g>
      <g fill="none" stroke="#4a3038" strokeWidth="5">
        <path d="M165 230L360 240L545 250L690 270L760 285" />
        <path d="M36 672L90 610L150 570L230 565L300 540L370 490L400 460L450 440L490 420L530 405L640 340L700 320" />
        <path d="M700 320L690 370L740 440L790 520L800 560" />
        <path d="M740 300L830 245L900 230L1010 180L1080 149" />
        <path d="M890 360L1010 372L1180 380L1240 378L1330 370L1450 380L1545 410" />
        <path d="M1350 350L1390 310L1450 290" />
        <path d="M890 360L890 480L850 560L860 640M940 235L895 280L890 360" />
        <path d="M790 560L940 550L1000 570L1060 620L1110 640" />
        <path d="M36 840L180 835L280 840L340 880L430 950L620 930L700 895L748 880" />
        <path d="M110 1217L160 1175L240 1150L320 1070L380 1000L430 965" />
        <path d="M430 965L455 1010L470 1050M36 1090L100 1130L150 1160" />
        <path d="M1520 200L1535 260M1545 690L1510 700M1530 1000L1540 1060M1518 1140H1545M1520 660L1545 740M1518 1160L1545 1215M1300 480L1310 410L1400 370" />
      </g>
      <g fill="none" stroke="#222" strokeWidth="3">
        <path d="M128 666H728L740 700L700 770M128 666L148 800V1160L204 1217M36 580H130V300L120 160M940 660H840M1000 650L1545 660M800 149V260L705 330M660 195L600 149" />
      </g>
      <g fill="none" stroke="#2a3568" strokeWidth="4">
        <path d="M745 800L735 850L690 930L680 990L650 1030L632 1060L610 1100L590 1150L600 1200" strokeDasharray="12 3" />
        <path d="M1070 200L1085 240L1060 290L1065 340L1030 380L1010 430L1100 435L1200 440L1290 415L1310 350" />
        <path d="M1440 200L1445 290L1400 300L1350 360M700 340L720 410L790 460L820 500M520 290L560 290L600 305" />
      </g>
    </g>
  );
}

function PlaceNames() {
  return (
    <g>
      {PLACES.map(([t, x, y, w, size, fill]) => (
        <text key={t} x={x} y={y} textLength={w} fontSize={size} fill={fill} fontWeight="700" fontFamily="Liberation Serif, serif">
          {t}
        </text>
      ))}
    </g>
  );
}

function HeatMap() {
  return (
    <svg width="511" height="357" viewBox="33 147 1512 1072" preserveAspectRatio="none" className="shrink-0">
      <defs>
        <clipPath id="tiles">
          <path d="M33 147H1545V1219H1506V1199H748V1219H33Z" />
        </clipPath>
        <clipPath id="heatclip">
          <rect x="36" y="149" width="1482" height="1048" />
        </clipPath>
        <filter id="terrain" x="0" y="0" width="100%" height="100%" colorInterpolationFilters="sRGB">
          <feTurbulence type="fractalNoise" baseFrequency="0.03" numOctaves="4" seed="4" />
          <feColorMatrix values="0.4 0 0 0 0.72  0.4 0 0 0 0.72  0.4 0 0 0 0.7  0 0 0 0 1" />
        </filter>
        <filter id="heat" filterUnits="userSpaceOnUse" x="-60" y="60" width="1680" height="1240" colorInterpolationFilters="sRGB">
          <feGaussianBlur stdDeviation="14" />
          <feColorMatrix values="1 0 0 0 0  1 0 0 0 0  1 0 0 0 0  0.800 0 0 0 0.200" />
          <feComponentTransfer>
            <feFuncR type="table" tableValues="0.50 0.48 0.46 0.36 0.36 0.24 0.36 0.82 1 1 1" />
            <feFuncG type="table" tableValues="0.48 0.50 0.58 0.82 1 1 1 1 0.80 0.46 0.12" />
            <feFuncB type="table" tableValues="1 1 1 1 0.98 0.55 0.24 0.16 0.12 0.04 0.02" />
            <feFuncA type="table" tableValues="0.2 0.36 0.66 0.68 0.7 0.76 0.82 0.88 0.9 0.92 0.96" />
          </feComponentTransfer>
        </filter>
      </defs>
      <g clipPath="url(#tiles)">
        <rect x="33" y="147" width="1512" height="1072" filter="url(#terrain)" />
        <g fill="none" stroke="#9a9aa2" strokeWidth="2">
          <path d="M240 430L250 480L225 560M290 760L310 800L330 770L350 810L370 780L400 820M560 640L600 620L640 660M60 1050L110 1000L140 1040M380 600L400 640L430 620M620 400L600 460L640 500M240 920L270 930L300 960" />
        </g>
        <MapLines />
        {SHIELDS.map(([x, y, t]) => (
          <g key={t + x}>
            <path d={`M${x - 28} ${y - 22}H${x + 28}Q${x + 28} ${y + 14} ${x} ${y + 26}Q${x - 28} ${y + 14} ${x - 28} ${y - 22}Z`} fill="#141e6e" />
            <path d={`M${x - 28} ${y - 22}H${x + 28}L${x + 26} ${y - 10}H${x - 26}Z`} fill="#6d2030" />
            <text x={x} y={y + 11} textAnchor="middle" fontSize="24" fill="#fff" fontFamily="Liberation Sans, sans-serif">{t}</text>
          </g>
        ))}
        <PlaceNames />
      </g>
      <g clipPath="url(#heatclip)">
        <g filter="url(#heat)">
          <rect x="-60" y="60" width="1680" height="1240" fill="rgb(163,163,163)" />
          <HeatBlobs blobs={GROUND} />
          <HeatBlobs blobs={COLD} />
          <HeatBlobs blobs={WARM} />
          <HeatBlobs blobs={GAPS} />
        </g>
        <g opacity=".2" aria-hidden="true">
          <PlaceNames />
        </g>
        <g opacity=".1">
          <MapLines />
        </g>
      </g>
    </svg>
  );
}

function MapView() {
  return (
    <div className="relative">
      <HeatMap />
      <div className="absolute top-[11px] left-[11px] flex w-[26px] flex-col gap-[10px] text-black">
        <svg width="26" height="52" viewBox="0 0 26 52" className="rounded-[4px] bg-white shadow-[0_1px_4px_rgba(0,0,0,0.6)]">
          <path d="M0 25.500H26" stroke="#ccc" />
          <path d="M8.500 13H18.500M13.500 8V18M9 39H18" stroke="#000" strokeWidth="2" />
        </svg>
        <svg width="26" height="26" viewBox="0 0 26 26" className="rounded-[4px] bg-white shadow-[0_1px_4px_rgba(0,0,0,0.6)]">
          <path d="M10.500 7.500V16.500H19.500M8 9.500H16.500V19" fill="none" stroke="#111" strokeWidth="1.800" />
        </svg>
        <svg width="26" height="26" viewBox="0 0 26 26" className="rounded-[4px] bg-white shadow-[0_1px_4px_rgba(0,0,0,0.6)]">
          <rect x="8" y="8" width="10" height="10" fill="#464646" />
        </svg>
      </div>
      <div className="absolute right-[9px] bottom-[17px] h-[18px] bg-white/40 px-[5px] text-[12.200px] leading-[18px] whitespace-nowrap text-[#333]">
        <span className="text-[#0078a8]">Leaflet</span> | Maps provided by USGS
      </div>
    </div>
  );
}

/* ---------- page ---------- */

const PIE_LEGEND: [string, string][] = [
  ["20", C.a20], ["30", C.a30], ["40", C.a40], ["0", C.b0], ["5,000", C.b5], ["10,000", C.b10], ["15,000", C.b15], ["20,000", C.b20],
  ["25,000", C.b25], ["30,000", C.b30], ["35,000", C.b35], ["40,000", C.b40], ["45,000", C.b45], ["25", C.a25], ["35", C.a35],
];

function Dashboard() {
  return (
    <main className="flex flex-1 gap-[10px] bg-[#ebeff0] p-[10px]">
      <div className="flex flex-col gap-[10px]">
        <Panel title="test bank example" icon="bar" className="h-[430px] w-[382px]">
          <BankChart />
          <Legend className="w-[105px]" items={[["Sum of balance", "#006e8a"]]} />
        </Panel>
        <Panel title="test line" icon="line" className="h-[210px] w-[382px]">
          <LineChart />
          <Legend items={[["Count", "#57c17b"]]} />
        </Panel>
      </div>
      <div className="flex flex-col gap-[10px]">
        <div className="flex gap-[10px]">
          <Panel title="bar2 test" icon="bar" className="h-[210px] w-[644px]">
            <MemoryChart />
            <Legend items={[["Count", "#57c17b"]]} />
          </Panel>
          <Panel title="test aare" icon="area" className="h-[210px] w-[513px]">
            <AreaChart />
            <Legend items={[["Count", "#57c17b"]]} />
          </Panel>
        </div>
        <div className="flex gap-[10px]">
          <Panel title="test map" icon="marker" iconClass="h-[14px] w-[9px]" className="h-[430px] w-[513px]">
            <MapView />
          </Panel>
          <Panel title="test pie test" icon="pie" iconClass="h-[16px] w-[16px]" className="h-[430px] w-[644px]">
            <PieChart />
            <Legend items={PIE_LEGEND} />
          </Panel>
        </div>
      </div>
    </main>
  );
}

export default function App() {
  return (
    <div className="h-[847px] w-[1595px] overflow-hidden bg-black font-['Liberation_Sans',Arial,sans-serif]">
      <div className="relative h-full overflow-hidden rounded-[8px] border border-[#b9bbbd] bg-[#080c14] px-[7px]">
        <div className="absolute top-0 left-0 h-[45px] w-[300px] bg-[radial-gradient(190px_110px_at_0%_30%,#66686a_25%,transparent_100%)]" />
        <div className="absolute top-0 right-0 h-[45px] w-[300px] bg-[radial-gradient(190px_90px_at_100%_50%,#66686a_25%,transparent_100%)]" />
        <div className="absolute top-[45px] left-0 h-[200px] w-[6px] bg-gradient-to-b from-[#55575a] via-[#3c3d40] to-[#c9c6c6]" />
        <div className="absolute top-[45px] right-0 h-[200px] w-[6px] bg-gradient-to-b from-[#55575a] via-[#3c3d40] to-[#c9c6c6]" />
        <div className="relative flex h-[839px] flex-col">
          <TitleBar />
          <Toolbar />
          <NavBar />
          <SubNav />
          <Dashboard />
        </div>
      </div>
    </div>
  );
}
